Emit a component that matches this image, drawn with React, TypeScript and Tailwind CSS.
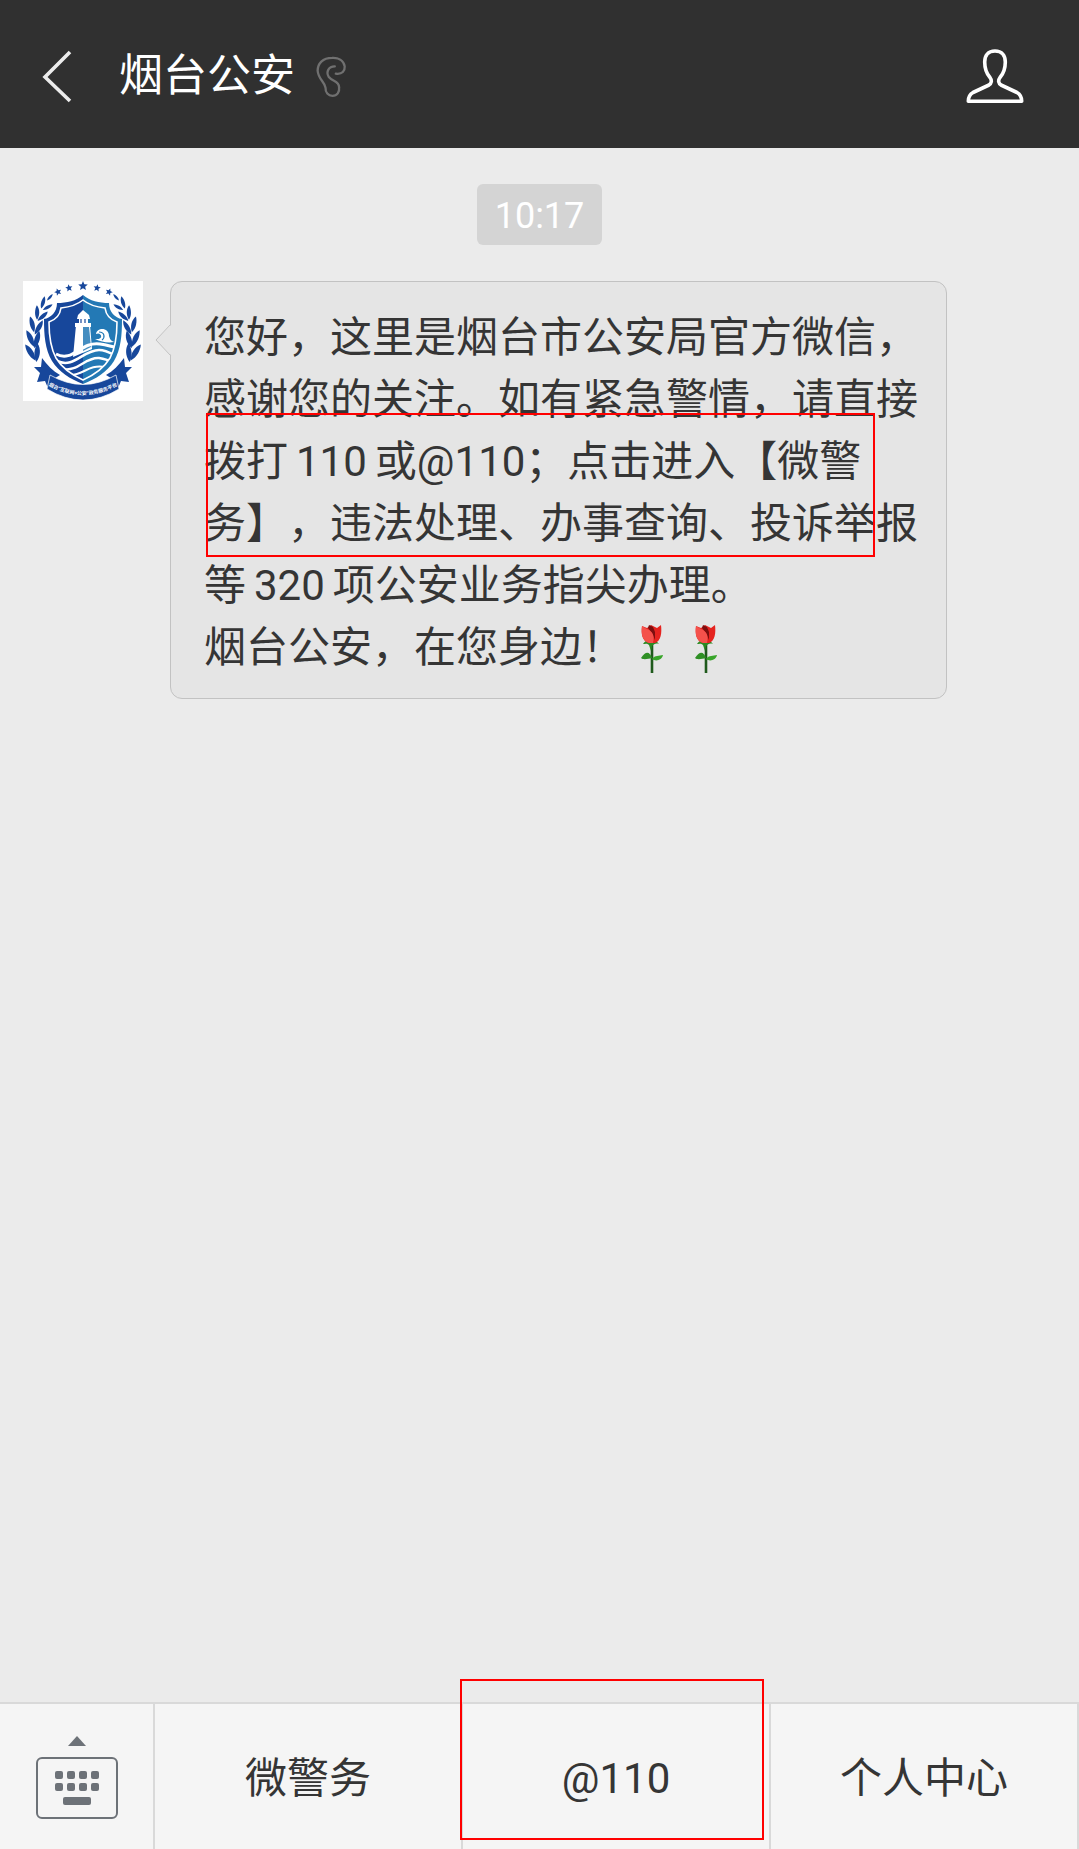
import type { ReactNode } from 'react';

const STARS = [
  { x: 35, y: 11, r: 3.8, turn: -20 },
  { x: 46, y: 7, r: 3.8, turn: -10 },
  { x: 60, y: 5, r: 5, turn: 0 },
  { x: 74, y: 7, r: 3.8, turn: 10 },
  { x: 86, y: 11, r: 3.8, turn: 20 },
];

// Left half of the laurel, the right half is the same list mirrored
const LEAVES = [
  { x: 7, y: 71, size: 1.1, turn: -26 },
  { x: 14, y: 71, size: 1.1, turn: 10 },
  { x: 7, y: 57, size: 1.05, turn: -18 },
  { x: 14, y: 58, size: 1.05, turn: 22 },
  { x: 9, y: 43, size: 0.95, turn: -8 },
  { x: 16, y: 46, size: 0.95, turn: 36 },
  { x: 14, y: 31, size: 0.85, turn: 6 },
  { x: 20, y: 35, size: 0.8, turn: 54 },
  { x: 20, y: 21, size: 0.75, turn: 22 },
  { x: 25, y: 26, size: 0.65, turn: 66 },
  { x: 27, y: 16, size: 0.5, turn: 48 },
];

function starPoints(cx: number, cy: number, r: number) {
  return Array.from({ length: 10 }, (_, i) => {
    const radius = i % 2 === 0 ? r : r * 0.45;
    const angle = (Math.PI / 5) * i - Math.PI / 2;
    return `${cx + radius * Math.cos(angle)},${cy + radius * Math.sin(angle)}`;
  }).join(' ');
}

function Laurel() {
  return (
    <g fill="#17479b">
      {LEAVES.map((leaf, i) => (
        <path
          key={i}
          d="M-1 -8 C3 -4 4 3 1 9 C-3 4 -3 -3 -1 -8Z"
          transform={`translate(${leaf.x} ${leaf.y}) rotate(${leaf.turn}) scale(${leaf.size})`}
        />
      ))}
    </g>
  );
}

function Emblem() {
  return (
    <svg viewBox="0 0 120 120" className="size-[120px] shrink-0 bg-white" role="img" aria-label="烟台公安">
      <defs>
        <clipPath id="shield">
          <path d="M60 19C54 24 47 26 38 27C37 34 32 39 26 41C26 54 27 66 33 77C39 87 49 94 60 99C71 94 81 87 87 77C93 66 94 54 94 41C88 39 83 34 82 27C73 26 66 24 60 19Z" />
        </clipPath>
      </defs>
      {STARS.map((s) => (
        <polygon key={s.x} points={starPoints(s.x, s.y, s.r)} fill="#17479b" transform={`rotate(${s.turn} ${s.x} ${s.y})`} />
      ))}
      <Laurel />
      <g transform="translate(120 0) scale(-1 1)">
        <Laurel />
      </g>
      <path d="M60 14C53 20 44 22 34 22C34 31 28 37 21 38C21 54 22 68 29 80C36 91 47 98 60 103Z" fill="#17479b" />
      <path d="M60 14C67 20 76 22 86 22C86 31 92 37 99 38C99 54 98 68 91 80C84 91 73 98 60 103Z" fill="#2379b5" />
      <path d="M60 19C54 24 47 26 38 27C37 34 32 39 26 41C26 54 27 66 33 77C39 87 49 94 60 99C71 94 81 87 87 77C93 66 94 54 94 41C88 39 83 34 82 27C73 26 66 24 60 19Z" fill="none" stroke="#fff" strokeWidth="1.6" />
      <g clipPath="url(#shield)">
        <path d="M53 44H67L69 68L50 76Z" fill="#fff" />
        <path d="M60 46H66L68 66L60 70Z" fill="#2379b5" opacity=".85" />
        <path d="M54 38L55 34L60 29L66 34L67 38Z" fill="#fff" />
        <path d="M56 38H65V43H56Z" fill="#fff" />
        <path d="M52 42H68V46H52Z" fill="#fff" />
        <path d="M58 38V42M62 38V42" stroke="#17479b" strokeWidth="1.2" />
        <path d="M33 73C50 82 58 60 77 63C84 64 90 66 96 67" fill="none" stroke="#fff" strokeWidth="3" />
        <path d="M34 80C51 88 60 69 76 69C84 69 89 73 95 76" fill="none" stroke="#fff" strokeWidth="2.6" />
        <path d="M40 88C55 91 62 76 76 77C82 78 85 79 88 81" fill="none" stroke="#fff" strokeWidth="2.4" />
        <path d="M48 94C60 94 66 83 82 86" fill="none" stroke="#fff" strokeWidth="2.2" />
        <path d="M72 58C82 59 78 50 73 53C74 46 86 46 86 55C87 59 89 60 91 61C85 62 78 61 72 58Z" fill="#fff" />
        <path d="M76 51C82 51 82 57 79 59" fill="none" stroke="#2379b5" strokeWidth="1.2" />
      </g>
      <path d="M19 77C24 84 30 90 37 94L29 99L25 107L22 100L14 101L17 92L11 86L18 86Z" fill="#17479b" />
      <path d="M101 77C96 84 90 90 83 94L91 99L95 107L98 100L106 101L103 92L109 86L102 86Z" fill="#17479b" />
      <path d="M27 94Q60 113 93 94L96 108Q60 130 24 108Z" fill="#17479b" stroke="#fff" strokeWidth=".7" />
      <path id="ribbon" d="M26 105Q60 123 94 105" fill="none" />
      <text fill="#fff" fontSize="5" fontWeight="700" textAnchor="middle">
        <textPath href="#ribbon" startOffset="50%">烟台“互联网+公安”政务服务平台</textPath>
      </text>
    </svg>
  );
}

function Rose() {
  return (
    <svg viewBox="0 0 54 54" className="inline-block size-[54px] align-middle" role="img" aria-label="玫瑰">
      <path d="M28 18V49" stroke="#1f5a1c" strokeWidth="2.6" />
      <path d="M19 20C21 16 25 16 28 17C31 16 33 17 35 20C32 19 30 20 28 22L27 27L25 21C23 19 21 20 19 20Z" fill="#2b8a22" />
      <path d="M28 34C26 28 22 26 17 34C19 36 24 35 28 34Z" fill="#2f8f25" />
      <path d="M28 35C31 31 35 32 39 31C38 36 32 38 28 35Z" fill="#38a52a" />
      <path d="M18 2C17 10 18 17 25 19H31C37 17 38 9 37 1L33 4L27 1L23 4Z" fill="#e5231f" />
      <path d="M25 1L29 3L31 8L31 16L28 9L24 4Z" fill="#7c0f0f" />
      <path d="M18 2L23 5C28 7 31 11 29 19H25C18 17 17 9 18 2Z" fill="#f4514b" />
    </svg>
  );
}

function KeyboardIcon() {
  return (
    <svg viewBox="0 0 82 84" className="h-[84px] w-[82px]" fill="#6d7278" aria-hidden="true">
      <path d="M32 11L41 1L50 11Z" />
      <rect x="1" y="23" width="80" height="60" rx="5" fill="none" stroke="#6d7278" strokeWidth="2" />
      {[19, 31, 43, 55].map((x) => (
        <g key={x}>
          <rect x={x} y="36" width="8" height="8" rx="2" />
          <rect x={x} y="48" width="8" height="8" rx="2" />
        </g>
      ))}
      <rect x="27" y="62" width="28" height="8" rx="2" />
    </svg>
  );
}

function MenuButton({ children, marked = false }: { children: ReactNode; marked?: boolean }) {
  return (
    <div className="relative flex flex-1 border-r-2 border-[#d9d9d9]">
      <button type="button" className="flex-1 pt-1 text-[42px] leading-[62px]">
        {children}
      </button>
      {marked && (
        <div className="absolute -top-[25px] right-[5px] bottom-[9px] -left-[3px] border-2 border-[#ff0000]" />
      )}
    </div>
  );
}

export default function App() {
  return (
    <div
      lang="zh-CN"
      className="flex min-h-screen flex-col bg-[#ebebeb] font-[Roboto,'Noto_Sans_CJK_SC',sans-serif] text-[#353535]"
    >
      <header className="flex h-[148px] items-center bg-[#303030] pt-1 pr-[53px] pl-10 text-white">
        <button type="button" aria-label="返回" className="mr-[43px]">
          <svg viewBox="0 0 36 56" className="h-14 w-9" fill="none" stroke="#ececec" strokeWidth="3.6">
            <path d="M30 4L5 29L30 53" />
          </svg>
        </button>
        <h1 className="text-[44px] leading-[62px]">烟台公安</h1>
        <svg viewBox="945 160 100 135" className="ml-5 h-[45px] w-[33px]" fill="none" stroke="#707070" strokeWidth="7" strokeLinecap="round" aria-hidden="true">
          <path d="M1008 219C1028 222 1036 210 1035 197C1032 178 1015 170 997 171C968 171 953 188 953 210C955 236 974 242 977 262C976 276 985 286 998 286C1012 286 1020 275 1018 260C1018 241 998 243 987 229C977 214 986 197 1005 197" />
        </svg>
        <button type="button" aria-label="个人资料" className="ml-auto">
          <svg viewBox="4 3 62 58" className="h-[58px] w-[62px]" fill="none" stroke="#fff" strokeWidth="3.6" strokeLinejoin="round">
            <path d="M35 7C28 7 24.700 11.500 24.700 18C24.700 25 26 29 30 33.500C32.200 36.500 31.500 39.500 29 41L13 48.500C9.500 50.500 8.300 52.500 8.300 57.300H61.700C61.700 52.500 60.500 50.500 57 48.500L41 41C38.500 39.500 37.800 36.500 40 33.500C44 29 45.300 25 45.300 18C45.300 11.500 42 7 35 7Z" />
          </svg>
        </button>
      </header>

      <main className="flex-1 pt-9">
        <div className="flex justify-center">
          <time className="rounded-md bg-[#d4d4d4] px-[18px] pt-1 text-4xl leading-[57px] text-white">10:17</time>
        </div>

        <div className="mt-9 flex items-start gap-[27px] px-[23px]">
          <Emblem />
          <div className="relative max-w-[777px] rounded-xl border border-[#c2c2c2] bg-[#e5e5e5] pt-[25px] pr-[28px] pb-[19px] pl-[33px]">
            <svg viewBox="0 0 17 36" className="absolute top-[40px] -left-4 h-9 w-[17px]" aria-hidden="true">
              <path d="M17 2L1 18L17 34Z" fill="#e5e5e5" />
              <path d="M16 2L1 18L16 34" fill="none" stroke="#c2c2c2" />
            </svg>
            <p className="text-[42px] leading-[62px] [text-spacing-trim:space-all]">
              您好，这里是烟台市公安局官方微信，感谢您的关注。如有紧急警情，请直接拨打<span className="mx-2">110</span>或@110；点击进入【微警务】，违法处理、办事查询、投诉举报等<span className="mx-2">320</span>项公安业务指尖办理。
              <br />
              烟台公安，在您身边！<Rose /><Rose />
            </p>
            {/* Highlight over the 110 lines */}
            <div className="absolute top-[131px] left-[35px] h-36 w-[669px] border-2 border-[#ff0000]" />
          </div>
        </div>
      </main>

      <footer className="flex h-[147px] border-t-2 border-[#d9d9d9] bg-[#f5f5f5]">
        <button type="button" aria-label="切换键盘" className="flex w-[155px] items-center justify-center border-r-2 border-[#d9d9d9]">
          <KeyboardIcon />
        </button>
        <MenuButton>微警务</MenuButton>
        <MenuButton marked>@110</MenuButton>
        <MenuButton>个人中心</MenuButton>
      </footer>
    </div>
  );
}
